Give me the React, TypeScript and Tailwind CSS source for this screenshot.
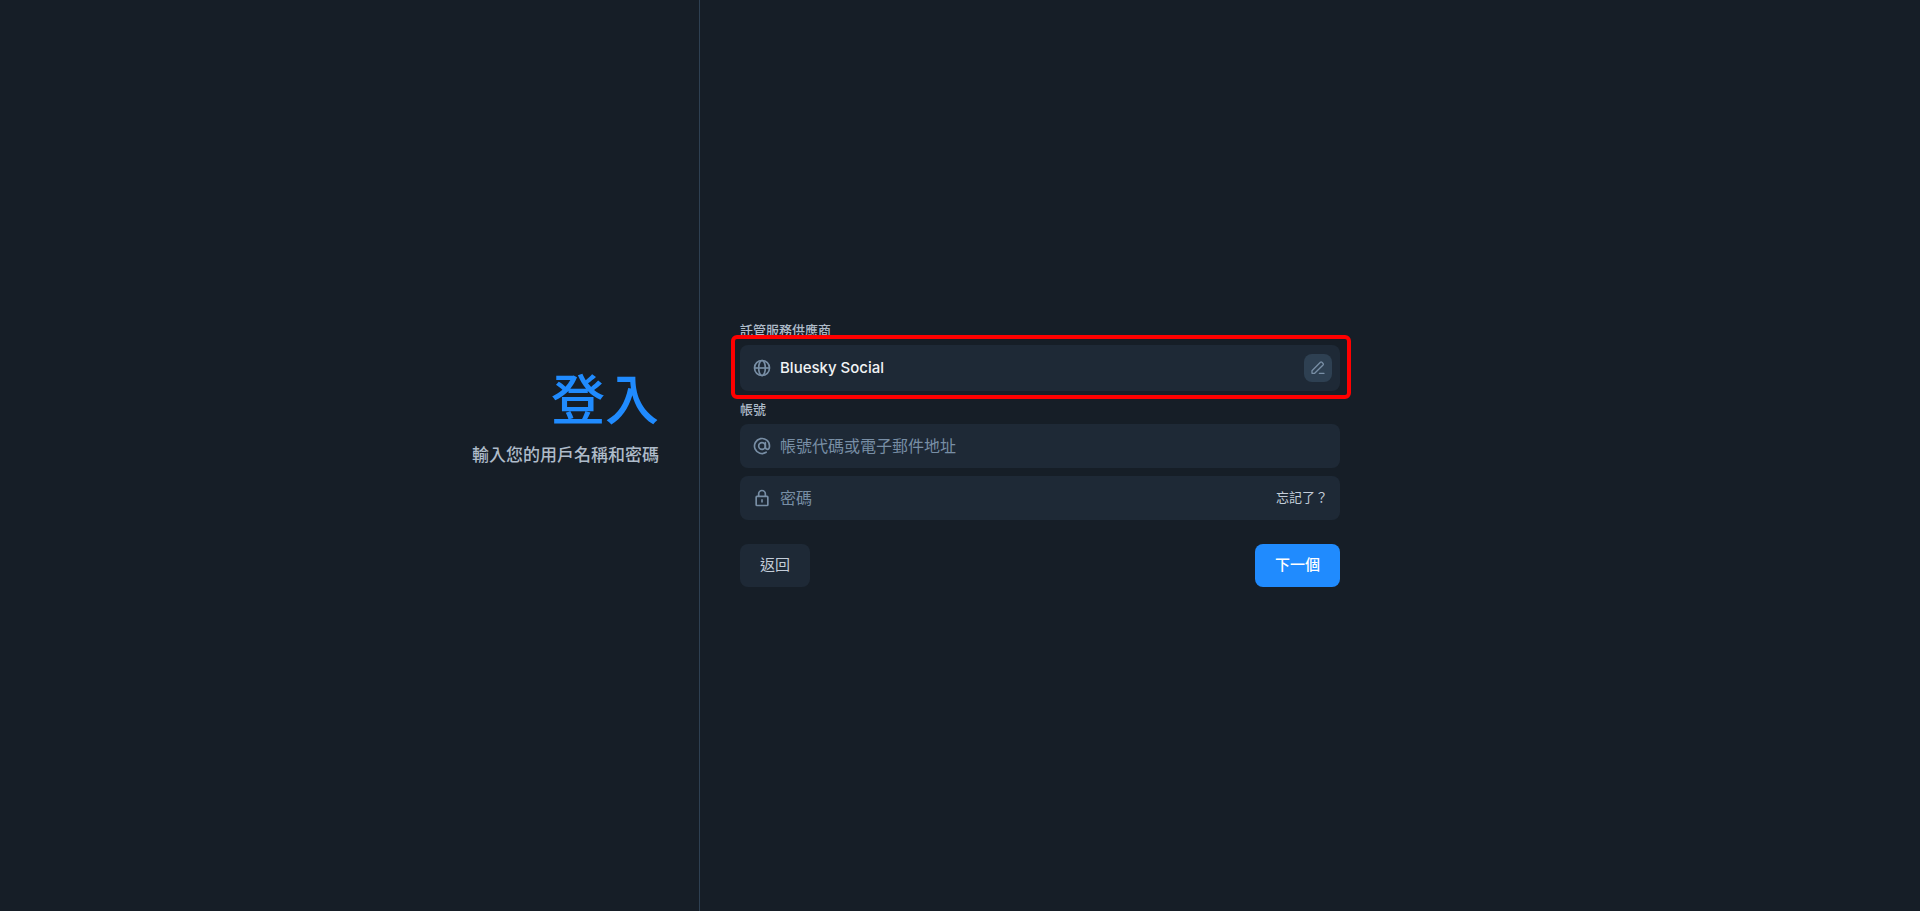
import { useState } from 'react';
import type { FormEvent, ReactNode } from 'react';

// -----------------------------------------------------------------------------
// Icons
// -----------------------------------------------------------------------------

interface IconProps {
  className?: string;
  children: ReactNode;
}

function Icon({ className = 'size-5', children }: IconProps) {
  return (
    <svg
      viewBox="0 0 24 24"
      fill="none"
      stroke="currentColor"
      strokeWidth="2"
      strokeLinejoin="round"
      aria-hidden="true"
      className={`shrink-0 text-[#788ea5] ${className}`}
    >
      {children}
    </svg>
  );
}

function GlobeIcon() {
  return (
    <Icon>
      <circle cx="12" cy="12" r="9" />
      <ellipse cx="12" cy="12" rx="4" ry="9" />
      <path d="M3 12h18" />
    </Icon>
  );
}

function AtIcon() {
  return (
    <Icon>
      <circle cx="12" cy="12" r="4" />
      <path d="M16 8v5c0 1.7 1 3 2.5 3S21 14.7 21 12a9 9 0 1 0-4 7.5" strokeLinecap="round" />
    </Icon>
  );
}

function LockIcon() {
  return (
    <Icon>
      <path d="M8 10V7a4 4 0 0 1 8 0v3" />
      <rect x="5" y="10" width="14" height="11" rx="1" />
      <path d="M12 13.5v4" />
    </Icon>
  );
}

function PencilIcon() {
  return (
    <Icon className="size-4">
      <path d="M3 20v-4L15.6 3.4a1.6 1.6 0 0 1 2.2 0l1.8 1.8a1.6 1.6 0 0 1 0 2.2L7 20Z" />
      <path d="M14 20h7" strokeLinecap="round" />
    </Icon>
  );
}

// -----------------------------------------------------------------------------
// Sign in page
// -----------------------------------------------------------------------------

const fieldClasses = 'flex h-11 items-center rounded-lg bg-[#1e2936] px-3';
const inputClasses =
  'ml-2 min-w-0 flex-1 bg-transparent text-base text-white outline-none placeholder:text-[#788ea5]';
const labelClasses = 'mb-2 block text-[13px] leading-[13px] font-medium text-[#aebbc9]';

export default function App() {
  const [identifier, setIdentifier] = useState('');
  const [password, setPassword] = useState('');

  const handleSubmit = (e: FormEvent) => {
    e.preventDefault();
  };

  return (
    <div
      lang="zh-Hant"
      className="flex min-h-screen bg-[#161e27] font-['Inter','Noto_Sans_CJK_TC',sans-serif]"
    >
      {/* Title */}
      <header className="flex w-[calc(50%-260px)] flex-col justify-center border-r border-[#2e4052] pr-10 pb-[76px] text-right">
        <h1 className="text-[54px] leading-[64px] font-medium text-[#208bfe]">登入</h1>
        <p className="mt-2.5 text-[17px] leading-6 font-medium text-[#aebbc9]">
          輸入您的用戶名稱和密碼
        </p>
      </header>

      {/* Form */}
      <main className="flex flex-1 flex-col justify-center px-10">
        <form onSubmit={handleSubmit} className="w-full max-w-[600px]">
          <span id="provider-label" className={labelClasses}>
            託管服務供應商
          </span>
          <div className="relative">
            <div
              role="group"
              aria-labelledby="provider-label"
              className="flex h-[46px] items-center rounded-lg bg-[#1e2936] pr-2 pl-3"
            >
              <GlobeIcon />
              <span className="ml-2 flex-1 text-[15px] font-medium text-[#f1f3f5]">
                Bluesky Social
              </span>
              <button
                type="button"
                aria-label="變更託管服務供應商"
                className="flex size-7 items-center justify-center rounded-lg bg-[#2e4052]"
              >
                <PencilIcon />
              </button>
            </div>
            <div className="pointer-events-none absolute -top-2.5 -right-[11px] -bottom-2 -left-[9px] rounded-md border-4 border-[#ff0000]" />
          </div>

          <label htmlFor="identifier" className={`mt-3 ${labelClasses}`}>
            帳號
          </label>
          <div className={fieldClasses}>
            <AtIcon />
            <input
              id="identifier"
              type="text"
              value={identifier}
              onChange={(e) => setIdentifier(e.target.value)}
              placeholder="帳號代碼或電子郵件地址"
              className={inputClasses}
            />
          </div>
          <div className={`mt-2 ${fieldClasses}`}>
            <LockIcon />
            <input
              type="password"
              aria-label="密碼"
              value={password}
              onChange={(e) => setPassword(e.target.value)}
              placeholder="密碼"
              className={inputClasses}
            />
            <button type="button" className="text-[13px] text-[#c3cdd9]">
              忘記了？
            </button>
          </div>

          {/* Actions */}
          <div className="mt-6 flex justify-between">
            <button
              type="button"
              className="h-[43px] rounded-lg bg-[#1e2936] px-5 text-[15px] text-[#c3cdd9]"
            >
              返回
            </button>
            <button
              type="submit"
              className="h-[43px] rounded-lg bg-[#208bfe] px-5 text-[15px] font-medium text-white"
            >
              下一個
            </button>
          </div>
        </form>
      </main>
    </div>
  );
}
